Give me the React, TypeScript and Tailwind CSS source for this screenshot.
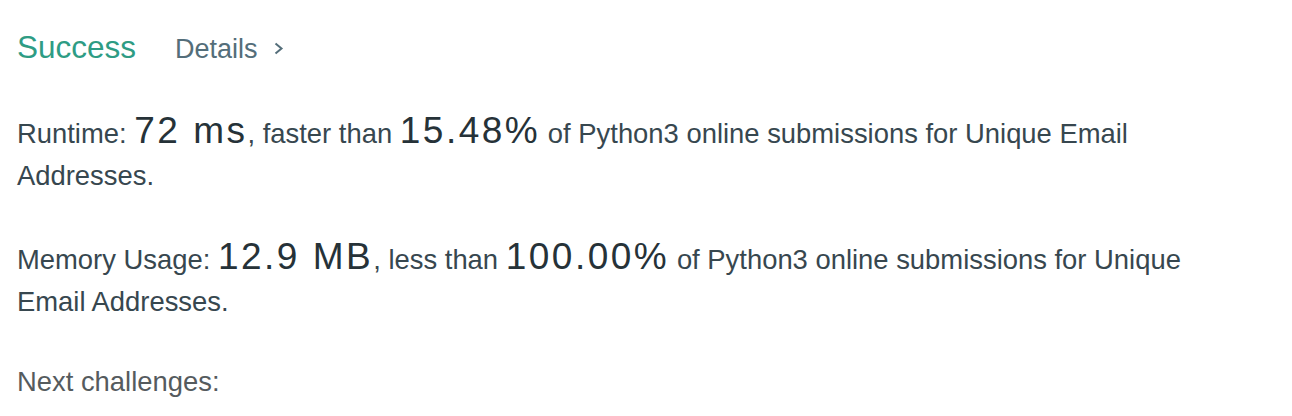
import React from "react";

const big = "text-[37px] tracking-[2.5px] text-[#263238]";

export default function App() {
  return (
    <div className="w-[1292px] h-[416px] bg-white overflow-hidden" style={{ fontFamily: "'Liberation Sans', Arial, sans-serif" }}>
      <div className="pl-[17px] w-[1240px]">
        <div className="flex items-baseline h-[40px] mt-[27px]">
          <span className="text-[31.5px] leading-[40px] text-[#2e9c84]">Success</span>
          <span className="ml-[39px] text-[27px] leading-[40px] text-[#546e7a]">Details</span>
          <svg className="ml-[16px] self-center mt-[2px]" width="10" height="13" viewBox="0 0 10 13" fill="none">
            <path d="M1.5 1.5 L7.5 6.5 L1.5 11.5" stroke="#546e7a" strokeWidth="2" />
          </svg>
        </div>
        <p className="mt-[43px] text-[27.4px] leading-[42px] text-[#37474f]">
          Runtime: <span className={big}>72 ms</span>, faster than <span className={big}>15.48%</span> of Python3 online submissions for Unique Email Addresses.
        </p>
        <p className="mt-[39px] text-[27.4px] leading-[42px] text-[#37474f]">
          Memory Usage: <span className={big}>12.9 MB</span>, less than <span className={big}>100.00%</span> of Python3 online submissions for Unique Email Addresses.
        </p>
        <p className="mt-[38px] text-[27.4px] leading-[42px] text-[#555b5e]">Next challenges:</p>
      </div>
    </div>
  );
}
